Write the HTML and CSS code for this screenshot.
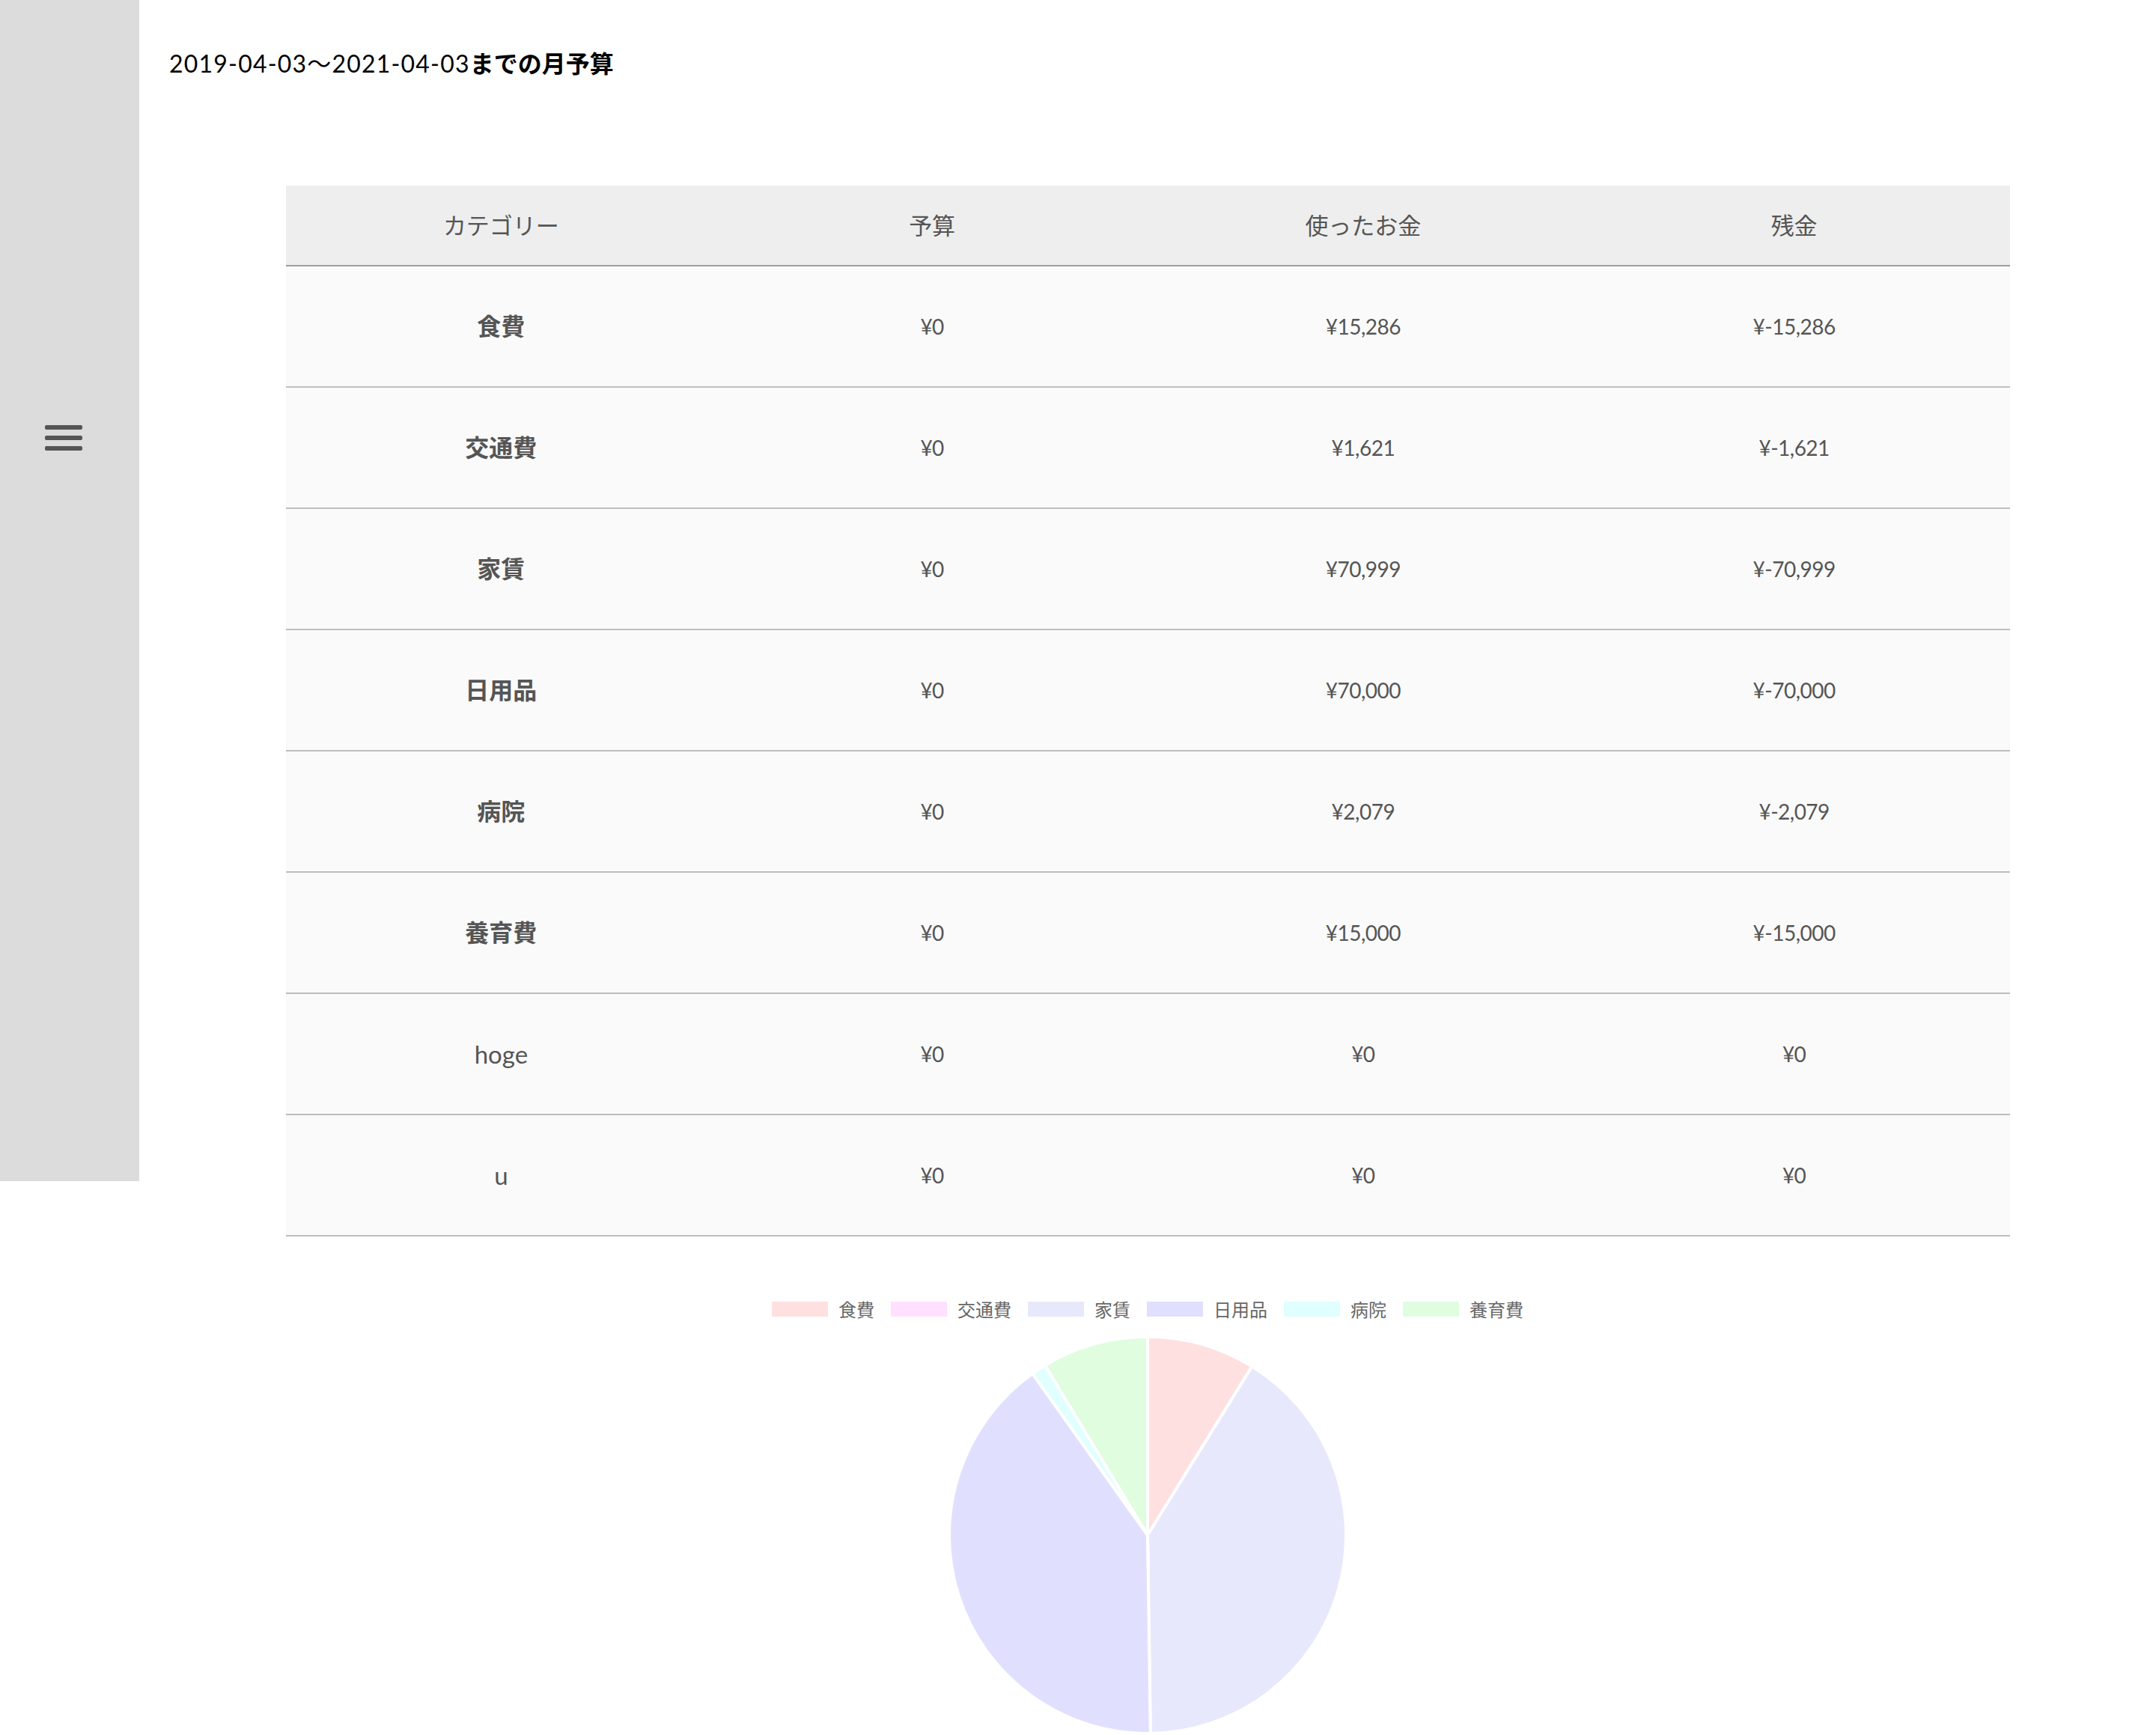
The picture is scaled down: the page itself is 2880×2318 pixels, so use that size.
FILE: index.html
```html
<!DOCTYPE html>
<html lang="ja">
<head>
<meta charset="utf-8">
<title>月予算</title>
<link rel="stylesheet" href="styles.css">
</head>
<body>
<div class="layout">
  <aside class="sidebar">
    <div class="hamburger">
      <span class="bar"></span>
      <span class="bar"></span>
      <span class="bar"></span>
    </div>
  </aside>
  <main class="main">
    <h1 class="title">2019-04-03〜2021-04-03<span class="title-jp">までの月予算</span></h1>

    <div class="budget-table">
      <div class="row head">
        <div class="cell">カテゴリー</div>
        <div class="cell">予算</div>
        <div class="cell">使ったお金</div>
        <div class="cell">残金</div>
      </div>
      <div class="row">
        <div class="cell cat jp">食費</div>
        <div class="cell num">¥0</div>
        <div class="cell num">¥15,286</div>
        <div class="cell num">¥-15,286</div>
      </div>
      <div class="row">
        <div class="cell cat jp">交通費</div>
        <div class="cell num">¥0</div>
        <div class="cell num">¥1,621</div>
        <div class="cell num">¥-1,621</div>
      </div>
      <div class="row">
        <div class="cell cat jp">家賃</div>
        <div class="cell num">¥0</div>
        <div class="cell num">¥70,999</div>
        <div class="cell num">¥-70,999</div>
      </div>
      <div class="row">
        <div class="cell cat jp">日用品</div>
        <div class="cell num">¥0</div>
        <div class="cell num">¥70,000</div>
        <div class="cell num">¥-70,000</div>
      </div>
      <div class="row">
        <div class="cell cat jp">病院</div>
        <div class="cell num">¥0</div>
        <div class="cell num">¥2,079</div>
        <div class="cell num">¥-2,079</div>
      </div>
      <div class="row">
        <div class="cell cat jp">養育費</div>
        <div class="cell num">¥0</div>
        <div class="cell num">¥15,000</div>
        <div class="cell num">¥-15,000</div>
      </div>
      <div class="row">
        <div class="cell cat">hoge</div>
        <div class="cell num">¥0</div>
        <div class="cell num">¥0</div>
        <div class="cell num">¥0</div>
      </div>
      <div class="row">
        <div class="cell cat">u</div>
        <div class="cell num">¥0</div>
        <div class="cell num">¥0</div>
        <div class="cell num">¥0</div>
      </div>
    </div>

    <section class="chart">
      <ul class="legend">
        <li class="legend-item"><span class="swatch c-food"></span>食費</li>
        <li class="legend-item"><span class="swatch c-transport"></span>交通費</li>
        <li class="legend-item"><span class="swatch c-rent"></span>家賃</li>
        <li class="legend-item"><span class="swatch c-daily"></span>日用品</li>
        <li class="legend-item"><span class="swatch c-hospital"></span>病院</li>
        <li class="legend-item"><span class="swatch c-child"></span>養育費</li>
      </ul>
      <svg class="pie" width="540" height="536" viewBox="0 0 540 536">
        <g stroke="#ffffff" stroke-width="4" stroke-linejoin="round">
          <path fill="#ffe0e0" d="M270 270 L270 5 A265 265 0 0 1 409.4 44.6 Z"/>
          <path fill="#e8e8fc" d="M270 270 L409.4 44.6 A265 265 0 0 1 273.84 534.97 Z"/>
          <path fill="#e0e0fe" d="M270 270 L273.84 534.97 A265 265 0 0 1 116.2 54.2 Z"/>
          <path fill="#e0ffff" d="M270 270 L116.2 54.2 A265 265 0 0 1 132.9 43.2 Z"/>
          <path fill="#e0fde0" d="M270 270 L132.9 43.2 A265 265 0 0 1 270 5 Z"/>
        </g>
      </svg>
    </section>
  </main>
</div>
</body>
</html>
```

FILE: styles.css
```css
html, body {
  margin: 0;
  padding: 0;
  background: #ffffff;
  overflow: hidden;
}

body {
  font-family: "Lato", "Noto Sans CJK JP", sans-serif;
  color: #555555;
}

.layout {
  display: flex;
  align-items: flex-start;
}

.sidebar {
  flex: 0 0 186px;
  width: 186px;
  height: 1578px;
  background: #dcdcdc;
  box-sizing: border-box;
  padding: 568px 0 0 60px;
}

.hamburger {
  display: flex;
  flex-direction: column;
  gap: 8px;
  width: 50px;
}

.bar {
  display: block;
  width: 50px;
  height: 6px;
  border-radius: 2px;
  background: #555555;
}

.main {
  flex: 1;
  min-width: 0;
  display: flex;
  flex-direction: column;
}

.title {
  margin: 61px 0 0 40px;
  font-size: 32px;
  line-height: 48px;
  font-weight: 400;
  color: #000000;
  letter-spacing: 1.2px;
  font-family: "Lato", "Noto Sans CJK JP", sans-serif;
}

.title-jp {
  font-weight: 700;
  letter-spacing: 0;
}

.budget-table {
  width: 2303px;
  margin: 139px auto 0;
}

.row {
  display: grid;
  grid-template-columns: repeat(4, 1fr);
  align-items: center;
  box-sizing: border-box;
  height: 162px;
  background: #fafafa;
  border-bottom: 2px solid #bdbdbd;
}

.row.head {
  height: 108px;
  background: #eeeeee;
  border-bottom: 2px solid #9e9e9e;
}

.cell {
  text-align: center;
  font-size: 31px;
  line-height: 46px;
  color: #555555;
}

.cat {
  font-size: 33px;
}

.cat.jp {
  font-size: 32px;
  font-weight: 700;
}

.num {
  font-size: 28px;
  letter-spacing: -0.5px;
}

.chart {
  display: flex;
  flex-direction: column;
  align-items: center;
}

.legend {
  list-style: none;
  margin: 85px 0 0;
  padding: 0;
  display: flex;
  gap: 22px;
  height: 24px;
  align-items: center;
}

.legend-item {
  display: flex;
  align-items: center;
  gap: 14px;
  font-size: 24px;
  line-height: 24px;
  color: #666666;
  font-family: "Noto Sans CJK JP", sans-serif;
}

.swatch {
  display: block;
  width: 75px;
  height: 20px;
}

.c-food { background: #ffe0e0; }
.c-transport { background: #ffe0ff; }
.c-rent { background: #e8e8fc; }
.c-daily { background: #e0e0fe; }
.c-hospital { background: #e0ffff; }
.c-child { background: #e0fde0; }

.pie {
  display: block;
  margin-top: 20px;
}
```
